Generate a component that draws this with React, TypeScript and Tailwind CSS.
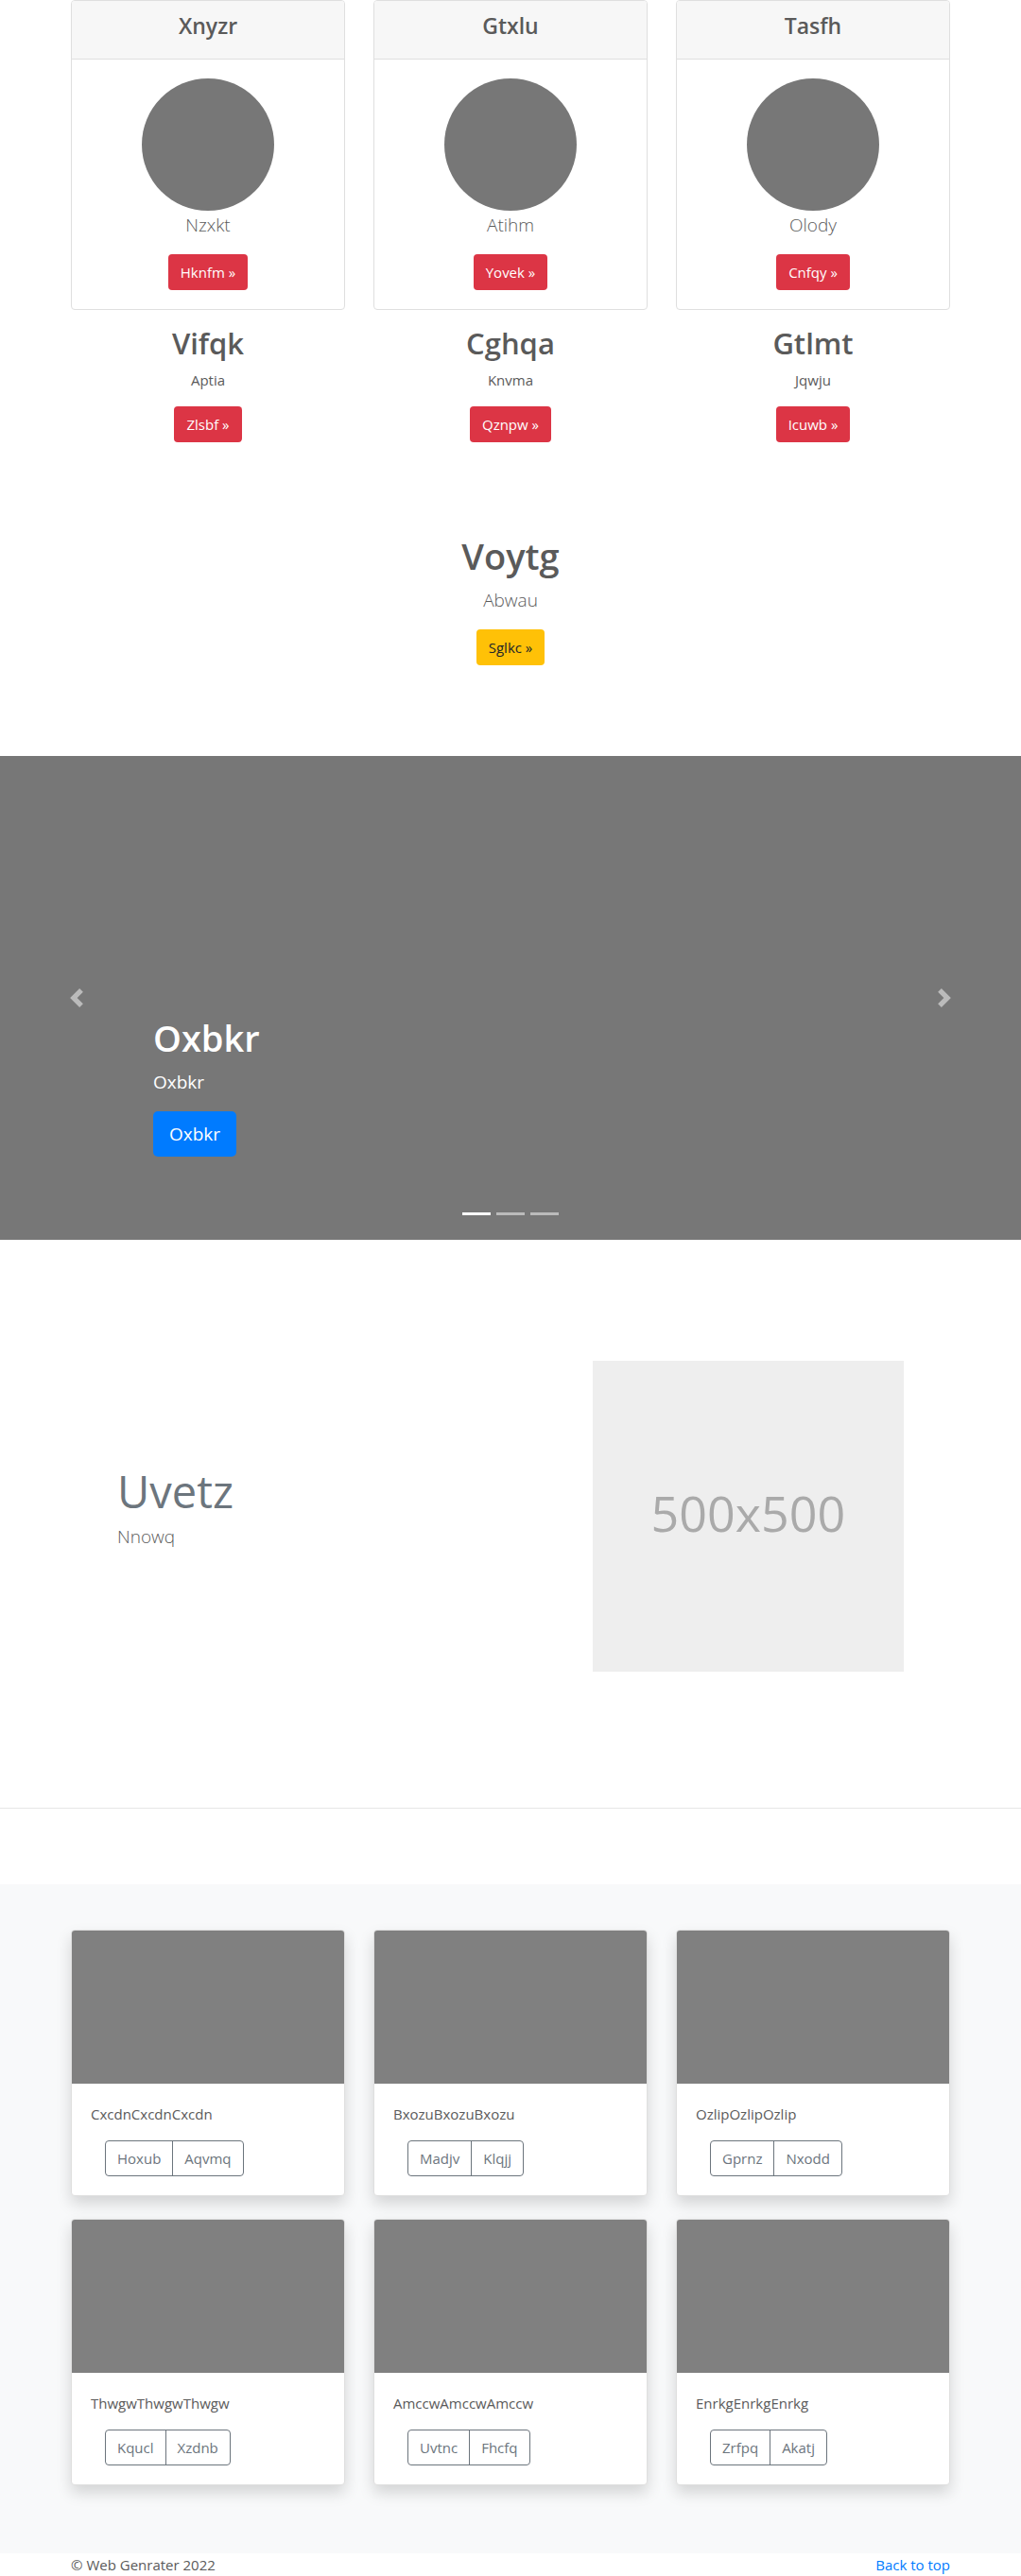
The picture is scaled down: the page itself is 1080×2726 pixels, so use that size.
import type { ReactNode } from "react";

const plans = [
  { title: "Xnyzr", text: "Nzxkt", action: "Hknfm" },
  { title: "Gtxlu", text: "Atihm", action: "Yovek" },
  { title: "Tasfh", text: "Olody", action: "Cnfqy" },
];

const topics = [
  { title: "Vifqk", text: "Aptia", action: "Zlsbf" },
  { title: "Cghqa", text: "Knvma", action: "Qznpw" },
  { title: "Gtlmt", text: "Jqwju", action: "Icuwb" },
];

const albums = [
  { text: "CxcdnCxcdnCxcdn", first: "Hoxub", second: "Aqvmq" },
  { text: "BxozuBxozuBxozu", first: "Madjv", second: "Klqjj" },
  { text: "OzlipOzlipOzlip", first: "Gprnz", second: "Nxodd" },
  { text: "ThwgwThwgwThwgw", first: "Kqucl", second: "Xzdnb" },
  { text: "AmccwAmccwAmccw", first: "Uvtnc", second: "Fhcfq" },
  { text: "EnrkgEnrkgEnrkg", first: "Zrfpq", second: "Akatj" },
];

function Container({ children }: { children: ReactNode }) {
  return <div className="mx-auto w-full max-w-[960px] px-[15px]">{children}</div>;
}

function DangerLink({ label }: { label: string }) {
  return (
    <a href="#" className="inline-block h-[38px] rounded bg-[#dc3545] px-[13px] leading-[38px] text-white">
      {label} »
    </a>
  );
}

function Chevron({ path }: { path: string }) {
  return (
    <svg viewBox="0 0 8 8" className="h-5 w-5" fill="#fff" aria-hidden="true">
      <path d={path} />
    </svg>
  );
}

export default function App() {
  return (
    <div className="bg-white font-['Open_Sans',sans-serif] text-[15px] leading-6 text-[#5a5a5a]">
      <Container>
        <section className="grid grid-cols-3 gap-[30px] text-center">
          {plans.map((plan) => (
            <article key={plan.title} className="overflow-hidden rounded border border-[#dfdfdf]">
              <header className="border-b border-[#dfdfdf] bg-[#f7f7f7] pt-3 pb-5">
                <h4 className="text-[23px] leading-[29px] font-semibold">{plan.title}</h4>
              </header>
              <div className="p-5">
                <div className="mx-auto h-[140px] w-[140px] rounded-full bg-[#777]" />
                <p className="mb-4 text-[19px] leading-[30px] font-light">{plan.text}</p>
                <DangerLink label={plan.action} />
              </div>
            </article>
          ))}
        </section>

        <section className="mt-4 grid grid-cols-3 gap-[30px] text-center">
          {topics.map((topic) => (
            <article key={topic.title}>
              <h2 className="mb-2 text-[31px] leading-[38px] font-semibold">{topic.title}</h2>
              <p className="mb-4">{topic.text}</p>
              <DangerLink label={topic.action} />
            </article>
          ))}
        </section>

        <section className="py-24 text-center">
          <h1 className="mb-2 text-[38px] leading-[48px] font-semibold">Voytg</h1>
          <p className="mb-4 text-[19px] leading-[30px] font-light">Abwau</p>
          <a href="#" className="inline-block h-[38px] rounded bg-[#ffc107] px-[13px] leading-[38px] text-[#212529]">
            Sglkc »
          </a>
        </section>
      </Container>

      <section className="relative flex h-[512px] flex-col items-start justify-end bg-[#777] px-[15%] pb-[88px] text-white">
        <h1 className="mb-2 text-[38px] leading-[48px] font-semibold">Oxbkr</h1>
        <p className="mb-4 text-[19px] leading-[30px]">Oxbkr</p>
        <a href="#" className="block h-12 rounded-[5px] bg-[#007bff] px-[17px] text-[19px] leading-[48px]">
          Oxbkr
        </a>
        <button
          type="button"
          aria-label="Previous"
          className="absolute inset-y-0 left-0 flex w-[15%] items-center justify-center opacity-50"
        >
          <Chevron path="M5.25 0l-4 4 4 4 1.5-1.5L4.25 4l2.5-2.5L5.25 0z" />
        </button>
        <button
          type="button"
          aria-label="Next"
          className="absolute inset-y-0 right-0 flex w-[15%] items-center justify-center opacity-50"
        >
          <Chevron path="M2.75 0l-1.5 1.5L3.75 4l-2.5 2.5L2.75 8l4-4-4-4z" />
        </button>
        <div className="absolute inset-x-0 bottom-[26px] flex justify-center gap-[6px]">
          <button type="button" aria-label="Slide 1" className="h-[3px] w-[30px] bg-white" />
          <button type="button" aria-label="Slide 2" className="h-[3px] w-[30px] bg-white/50" />
          <button type="button" aria-label="Slide 3" className="h-[3px] w-[30px] bg-white/50" />
        </div>
      </section>

      <section className="mx-auto grid w-full max-w-[960px] grid-cols-12 items-center px-[49px] pt-32 pb-36">
        <div className="col-span-7 px-[15px]">
          <h2 className="mb-2 text-[47px] leading-[50px] text-[#6c757d]">Uvetz</h2>
          <p className="mb-4 text-[19px] leading-[30px] font-light">Nnowq</p>
        </div>
        <div className="col-span-5 px-[15px]">
          <div className="flex aspect-square items-center justify-center bg-[#eee] pb-2 text-[52px] text-[#aaa]">
            500x500
          </div>
        </div>
      </section>

      <hr className="mb-20 border-t border-[#e6e6e6]" />

      <section className="bg-[#f8f9fa] pt-12 pb-[72px]">
        <Container>
          <div className="grid grid-cols-3 gap-x-[30px] gap-y-6">
            {albums.map((album) => (
              <article
                key={album.text}
                className="overflow-hidden rounded border border-[#dfdfdf] bg-white shadow-[0_8px_16px_rgba(0,0,0,0.15)]"
              >
                <div className="h-[162px] bg-[#808080]" />
                <div className="p-5">
                  <p className="mb-4">{album.text}</p>
                  <div className="ml-[15px] inline-flex h-[38px] divide-x divide-[#6c757d] rounded border border-[#6c757d] align-top text-[#6c757d]">
                    <button type="button" className="px-3">
                      {album.first}
                    </button>
                    <button type="button" className="px-3">
                      {album.second}
                    </button>
                  </div>
                </div>
              </article>
            ))}
          </div>
        </Container>
      </section>

      <footer>
        <Container>
          <div className="flex justify-between">
            <p>© Web Genrater 2022</p>
            <a href="#" className="text-[#007bff]">
              Back to top
            </a>
          </div>
        </Container>
      </footer>
    </div>
  );
}
